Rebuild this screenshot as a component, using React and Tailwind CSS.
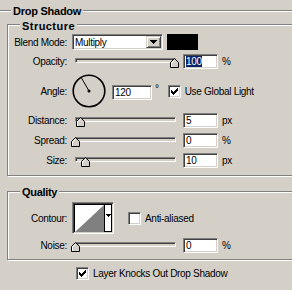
import React from 'react';

const etched = 'border border-[#808080] shadow-[inset_1px_1px_0_#fff,1px_1px_0_#fff]';
const sunken =
  'border border-t-[#808080] border-l-[#808080] border-r-white border-b-white shadow-[inset_1px_1px_0_#404040,inset_-1px_-1px_0_#d4d0c8]';
const raised =
  'border border-t-[#d4d0c8] border-l-[#d4d0c8] border-r-[#404040] border-b-[#404040] shadow-[inset_1px_1px_0_#fff,inset_-1px_-1px_0_#808080]';

const Label = ({ children }) => (
  <div className="w-[59px] shrink-0 text-right">{children}</div>
);

const Field = ({ value, selected, className = 'w-[35px]' }) => (
  <div className={`h-[15px] bg-white ${sunken} flex items-center pl-[2px] ${className}`}>
    {selected ? (
      <span className="bg-[#0a246a] text-white leading-[11px]">{value}</span>
    ) : (
      <span>{value}</span>
    )}
  </div>
);

const Check = ({ checked }) => (
  <div className={`w-[13px] h-[13px] shrink-0 bg-white ${sunken} flex items-center justify-center`}>
    {checked && (
      <svg width="7" height="7" viewBox="0 0 7 7" shapeRendering="crispEdges">
        <rect x="6" y="0" width="1" height="1" />
        <rect x="5" y="1" width="2" height="1" />
        <rect x="0" y="2" width="1" height="1" />
        <rect x="4" y="2" width="3" height="1" />
        <rect x="0" y="3" width="2" height="1" />
        <rect x="3" y="3" width="3" height="1" />
        <rect x="0" y="4" width="5" height="1" />
        <rect x="1" y="5" width="3" height="1" />
        <rect x="2" y="6" width="1" height="1" />
      </svg>
    )}
  </div>
);

const Slider = ({ value }) => (
  <div className="relative w-[110px] h-[10px] shrink-0">
    <div className={`ml-[4px] w-[101px] h-[5px] bg-[#d4d0c8] ${sunken}`} />
    <svg
      className="absolute top-0"
      style={{ left: Math.round(value * 0.99) }}
      width="9"
      height="10"
      viewBox="0 0 9 10"
    >
      <polygon points="4.5,0.5 8.5,4.5 8.5,9.5 0.5,9.5 0.5,4.5" fill="#d4d0c8" stroke="#000" />
      <polyline points="1.5,9 1.5,5 4.5,2" fill="none" stroke="#fff" />
    </svg>
  </div>
);

const SliderRow = ({ label, value, unit, selected, className = '' }) => (
  <div className={`flex items-center h-[15px] ${className}`}>
    <Label>{label}</Label>
    <div className="ml-[4px] mt-[4px] self-start">
      <Slider value={value} />
    </div>
    <Field value={String(value)} selected={selected} className="w-[35px] ml-[2px]" />
    <span className="ml-[4px]">{unit}</span>
  </div>
);

const Arrow = () => (
  <svg width="7" height="4" viewBox="0 0 7 4" shapeRendering="crispEdges">
    <polygon points="0,0 7,0 3.5,4" fill="#000" />
  </svg>
);

const Group = ({ title, titleClass, className, children }) => (
  <div className={`${etched} ${className}`}>
    <div className={`block w-fit bg-[#d4d0c8] px-[2px] font-bold h-[13px] leading-[13px] ${titleClass}`}>
      {title}
    </div>
    {children}
  </div>
);

export default function App() {
  return (
    <div className="w-[292px] h-[290px] overflow-hidden bg-[#d4d0c8] text-black text-[10px] tracking-[-0.3px] font-['Liberation_Sans',Arial,sans-serif] pt-[10px]">
      <Group
        title="Drop Shadow"
        titleClass="-mt-[6px] ml-[4px] text-[11px] tracking-[-0.25px]"
        className="ml-[-3px] w-[340px] h-[300px] pl-[9px]"
      >
        <Group
          title="Structure"
          titleClass="-mt-[5px] ml-[12px] text-[11px] tracking-[0.45px]"
          className="mt-[6px] w-[310px] pb-[7px]"
        >
          <div className="flex items-center h-[16px] mt-[1px]">
            <Label>Blend Mode:</Label>
            <div className={`ml-[5px] w-[91px] h-[16px] bg-white ${sunken} flex items-center`}>
              <span className="flex-1 pl-[2px]">Multiply</span>
              <div className={`w-[15px] h-[12px] mr-[1px] bg-[#d4d0c8] ${raised} flex items-center justify-center`}>
                <Arrow />
              </div>
            </div>
            <div className="ml-[4px] w-[31px] h-[16px] bg-black" />
          </div>

          <SliderRow label="Opacity:" value={100} unit="%" selected className="mt-[4px]" />

          <div className="flex items-center h-[34px] mt-[5px]">
            <Label>Angle:</Label>
            <svg className="ml-[5px] shrink-0" width="34" height="34" viewBox="0 0 34 34">
              <circle cx="17" cy="17" r="15.8" fill="none" stroke="#000" strokeWidth="1.6" />
              <line x1="17" y1="17" x2="9.5" y2="4" stroke="#000" strokeWidth="1" />
              <circle cx="17" cy="17" r="1.5" fill="#000" />
            </svg>
            <div className="ml-[6px] mt-[3px]">
              <Field value="120" className="w-[40px]" />
            </div>
            <span className="ml-[3px] self-start mt-[11px] leading-[8px]">°</span>
            <div className="ml-[9px]">
              <Check checked />
            </div>
            <span className="ml-[4px]">Use Global Light</span>
          </div>

          <SliderRow label="Distance:" value={5} unit="px" className="mt-[5px]" />
          <SliderRow label="Spread:" value={0} unit="%" className="mt-[5px]" />
          <SliderRow label="Size:" value={10} unit="px" className="mt-[5px]" />
        </Group>

        <Group
          title="Quality"
          titleClass="-mt-[6px] ml-[12px] text-[11px]"
          className="mt-[15px] w-[310px] pb-[6px]"
        >
          <div className="flex items-center h-[32px] mt-[3px]">
            <Label>Contour:</Label>
            <div className={`ml-[5px] w-[42px] h-[32px] bg-white ${sunken} p-[1px] flex`}>
              <div className="flex flex-1 border border-black">
                <svg width="29" height="27" viewBox="0 0 29 27" className="shrink-0">
                  <rect width="29" height="27" fill="#fff" />
                  <polygon points="0,27 29,0 29,27" fill="#808080" />
                </svg>
                <div className="flex-1 border-l border-black flex justify-center pt-[9px]">
                  <svg width="5" height="3" viewBox="0 0 5 3" shapeRendering="crispEdges">
                    <polygon points="0,0 5,0 2.5,3" fill="#000" />
                  </svg>
                </div>
              </div>
            </div>
            <div className="ml-[14px]">
              <Check />
            </div>
            <span className="ml-[4px]">Anti-aliased</span>
          </div>

          <SliderRow label="Noise:" value={0} unit="%" className="mt-[4px]" />
        </Group>

        <div className="flex items-center mt-[7px] ml-[69px] h-[13px]">
          <Check checked />
          <span className="ml-[4px]">Layer Knocks Out Drop Shadow</span>
        </div>
      </Group>
    </div>
  );
}
